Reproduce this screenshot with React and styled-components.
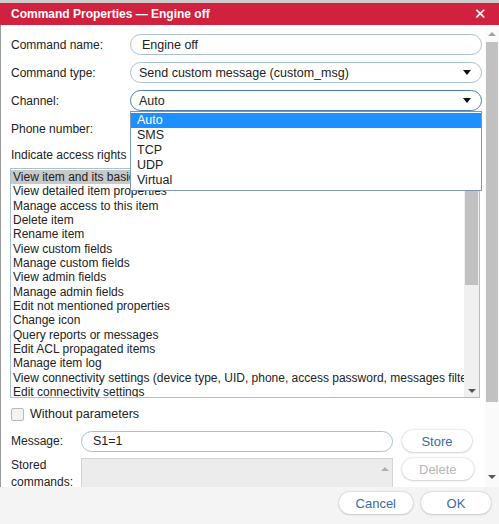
import React from "react";
import styled, { createGlobalStyle } from "styled-components";

const Global = createGlobalStyle`
  html, body { margin: 0; padding: 0; }
  body {
    width: 499px; height: 524px; overflow: hidden; background: #fff;
    font-family: "Liberation Sans", Arial, sans-serif; font-size: 12px; color: #222;
  }
`;

const Page = styled.div`
  width: 499px; height: 524px; overflow: hidden; position: relative;
  background: #fff; display: flex; flex-direction: column;
`;

const TopStrip = styled.div`
  height: 3px; background: #cfc9ca; flex: none;
`;

const Header = styled.div`
  height: 22px; flex: none; background: #d2213f; color: #fff;
  display: flex; align-items: center; justify-content: space-between;
  padding: 0 12px 0 11px; font-weight: bold; font-size: 12px;
`;

const Close = styled.span`
  font-size: 15px; font-weight: normal; line-height: 1; margin-top: -1px;
`;

const Body = styled.div`
  height: 462px; flex: none; display: flex; overflow: hidden;
  border-left: 1px solid #9a9a9a;
`;

const Content = styled.div`
  flex: 1; min-width: 0; padding: 9px 3px 0 9px; position: relative;
  display: flex; flex-direction: column;
  & > * { flex-shrink: 0; }
`;

const FormRow = styled.div`
  display: grid; grid-template-columns: 120px minmax(0, 1fr); align-items: center;
  height: 21px; margin-bottom: ${(p) => p.$mb ?? 7}px;
  position: relative;
`;

const Label = styled.div`
  padding-left: 1px; white-space: nowrap;
`;

const PillInput = styled.div`
  height: 19px; border: 1px solid ${(p) => (p.$focus ? "#4d7fae" : "#a8c2cd")};
  border-radius: 11px; background: #fff; display: flex; align-items: center;
  padding-left: ${(p) => p.$pl ?? 8}px; padding-right: 10px; font-size: 12.5px; color: #222;
  justify-content: space-between; min-width: 0;
`;

const Caret = styled.span`
  width: 0; height: 0; border-left: 4px solid transparent; border-right: 4px solid transparent;
  border-top: 5px solid #111;
`;

const Dropdown = styled.div`
  position: absolute; left: 120px; right: 0; top: 21px; z-index: 5;
  background: #fff; border: 1px solid #7d98b6; padding: 1px 0 2px;
`;

const Option = styled.div`
  height: 15px; line-height: 15px; padding-left: 6px; font-size: 12.5px;
  background: ${(p) => (p.$active ? "#1e8fff" : "transparent")};
  color: ${(p) => (p.$active ? "#fff" : "#222")};
`;

const TextLine = styled.div`
  height: 21px; display: flex; align-items: center; padding-left: 1px;
  margin-top: ${(p) => p.$mt ?? 0}px;
  white-space: nowrap;
`;

const ListBox = styled.div`
  height: 228px; border: 1px solid #a8c2cd; display: flex; margin: 3px 2px 0 0;
  min-width: 0;
`;

const ListItems = styled.div`
  flex: 1; min-width: 0; overflow: hidden; padding-top: 1px;
`;

const ListItem = styled.div`
  height: 14.35px; line-height: 14.35px; padding-left: 2px; white-space: nowrap;
  font-size: 12px; color: #222;
  background: ${(p) => (p.$sel ? "#c9c9c9" : "transparent")};
`;

const VScroll = styled.div`
  width: ${(p) => p.$w ?? 15}px; flex: none; background: ${(p) => p.$track ?? "#f0f0f0"};
  display: flex; flex-direction: column; align-items: center; position: relative;
`;

const Thumb = styled.div`
  width: ${(p) => p.$w ?? 13}px; background: #c1c1c1;
  height: ${(p) => p.$h}px; margin-top: ${(p) => p.$mt ?? 0}px; flex: none;
`;

const Arrow = styled.span`
  width: 0; height: 0; border-left: 4px solid transparent; border-right: 4px solid transparent;
  ${(p) => (p.$up ? `border-bottom: 4px solid ${p.$c ?? "#a3a3a3"};` : `border-top: 4px solid ${p.$c ?? "#555"};`)}
  flex: none;
`;

const Spacer = styled.div`
  flex: 1;
`;

const CheckRow = styled.label`
  display: flex; align-items: center; gap: 6px; margin: 9px 0 0 1px; height: 14px;
  font-size: 12.5px;
`;

const Check = styled.span`
  width: 11px; height: 11px; border: 1px solid #b8b8b8; border-radius: 2px; background: #f3f3f3;
  flex: none;
`;

const MsgRow = styled.div`
  display: grid; grid-template-columns: 62px 312px auto; column-gap: 9px;
  align-items: ${(p) => p.$align ?? "center"}; margin-top: ${(p) => p.$mt ?? 0}px;
`;

const Button = styled.button`
  height: 22px; min-width: 70px; padding: 0 17px; border-radius: 11px;
  border: none; background: #fff; box-shadow: 0 0 2px rgba(0,0,0,0.25), 0 1px 2px rgba(0,0,0,0.12);
  font-family: inherit; font-size: 13px; color: ${(p) => (p.disabled ? "#b6b6b6" : "#3b69a6")};
  justify-self: start;
`;

const StoredLabel = styled.div`
  line-height: 17px; padding-left: 1px; margin-top: -1px;
`;

const StoredBox = styled.div`
  height: 50px; background: #ececec; border: 1px solid #d4d4d4; position: relative;
  display: flex; justify-content: flex-end;
`;

const StoredScroll = styled.div`
  width: 14px; display: flex; justify-content: center; padding-top: 8px;
`;

const Footer = styled.div`
  flex: 1; background: #f4f4f4; display: flex; justify-content: flex-end;
  align-items: flex-start; gap: 8px; padding: 5px 8px 0 0;
`;

const rights = [
  "View item and its basic properties",
  "View detailed item properties",
  "Manage access to this item",
  "Delete item",
  "Rename item",
  "View custom fields",
  "Manage custom fields",
  "View admin fields",
  "Manage admin fields",
  "Edit not mentioned properties",
  "Change icon",
  "Query reports or messages",
  "Edit ACL propagated items",
  "Manage item log",
  "View connectivity settings (device type, UID, phone, access password, messages filter)",
  "Edit connectivity settings",
];

const channels = ["Auto", "SMS", "TCP", "UDP", "Virtual"];

export default function App() {
  return (
    <Page>
      <Global />
      <TopStrip />
      <Header>
        <span>Command Properties — Engine off</span>
        <Close>✕</Close>
      </Header>
      <Body>
        <Content>
          <FormRow>
            <Label>Command name:</Label>
            <PillInput $pl={11}>Engine off</PillInput>
          </FormRow>
          <FormRow>
            <Label>Command type:</Label>
            <PillInput>
              Send custom message (custom_msg)
              <Caret />
            </PillInput>
          </FormRow>
          <FormRow $mb={0}>
            <Label>Channel:</Label>
            <PillInput $focus>
              Auto
              <Caret />
            </PillInput>
            <Dropdown>
              {channels.map((c, i) => (
                <Option key={c} $active={i === 0}>{c}</Option>
              ))}
            </Dropdown>
          </FormRow>
          <TextLine $mt={7}>Phone number:</TextLine>
          <TextLine $mt={5}>Indicate access rights required to execute this command:</TextLine>
          <ListBox>
            <ListItems>
              {rights.map((r, i) => (
                <ListItem key={r} $sel={i === 0}>{r}</ListItem>
              ))}
            </ListItems>
            <VScroll $w={15}>
              <Thumb $h={116} />
              <Spacer />
              <Arrow $c="#555" />
              <div style={{ height: 4 }} />
            </VScroll>
          </ListBox>
          <CheckRow>
            <Check />
            Without parameters
          </CheckRow>
          <MsgRow $mt={9}>
            <Label>Message:</Label>
            <PillInput $pl={11}>S1=1</PillInput>
            <Button>Store</Button>
          </MsgRow>
          <MsgRow $mt={6} $align="start">
            <StoredLabel>Stored<br />commands:</StoredLabel>
            <StoredBox>
              <StoredScroll>
                <Arrow $up $c="#b0b0b0" />
              </StoredScroll>
            </StoredBox>
            <Button disabled>Delete</Button>
          </MsgRow>
        </Content>
        <VScroll $w={14} $track="#fafafa">
          <div style={{ height: 7 }} />
          <Arrow $up $c="#a0a0a0" />
          <Thumb $h={360} $mt={6} $w={12} />
          <Spacer />
          <Arrow $c="#555" />
          <div style={{ height: 8 }} />
        </VScroll>
      </Body>
      <Footer>
        <Button>Cancel</Button>
        <Button>OK</Button>
      </Footer>
    </Page>
  );
}
